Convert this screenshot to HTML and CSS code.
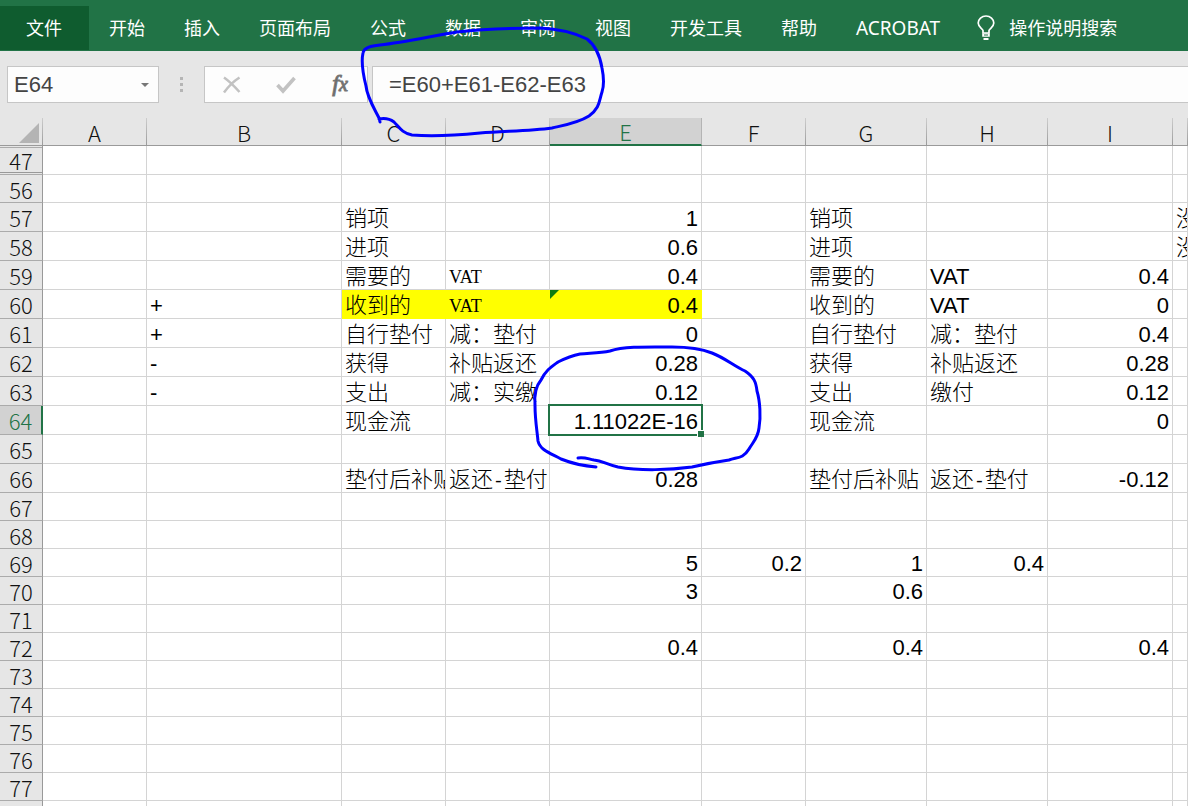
FILE: index.html
```html
<!DOCTYPE html>
<html lang="zh-CN">
<head>
<meta charset="utf-8">
<title>E64</title>
<link rel="stylesheet" href="styles.css">
</head>
<body>
<div class="app">
<nav class="ribbon">
<button class="tab file">文件</button>
<button class="tab">开始</button>
<button class="tab">插入</button>
<button class="tab">页面布局</button>
<button class="tab">公式</button>
<button class="tab">数据</button>
<button class="tab">审阅</button>
<button class="tab">视图</button>
<button class="tab">开发工具</button>
<button class="tab">帮助</button>
<button class="tab latin">ACROBAT</button>
<button class="tab tell"><svg class="bulb" viewBox="0 0 18 26" aria-hidden="true"><path d="M6 18v-2.500C5.500 13.500 1.200 12 1.200 8a7.800 7 0 0 1 15.600 0c0 4-4.300 5.500-4.800 7.500V18z" fill="none" stroke="#fff" stroke-width="1.700"/><path d="M5.200 18.500h7.600v3.300H5.200zM6.500 23h5v2h-5z" fill="#fff"/><path d="M7 20h4" stroke="#217346" stroke-width="1"/></svg>操作说明搜索</button>
</nav>
<div class="formula-bar">
<div class="box name-box"><input class="name-input" aria-label="名称框" value="E64"><button class="drop" aria-label="展开名称框"><svg width="8" height="4" viewBox="0 0 8 4"><path d="M0 0h8L4 4z" fill="#777"/></svg></button></div>
<div class="grip"><i></i><i></i><i></i></div>
<div class="box actions">
<button aria-label="取消"><svg width="20" height="18" viewBox="0 0 20 18"><path d="M2 1.500C7 5 13 11 17.500 16M17.500 1.500C12 5 6 11 2 16.500" fill="none" stroke="#c2c2c2" stroke-width="2.500"/></svg></button>
<button aria-label="输入"><svg width="20" height="18" viewBox="0 0 20 18"><path d="M1.500 9l5.500 6L18.500 2" fill="none" stroke="#c2c2c2" stroke-width="3.600"/></svg></button>
<button class="fx" aria-label="插入函数"><span class="f">f</span><span class="x">x</span></button>
</div>
<input class="box formula" aria-label="编辑栏" value="=E60+E61-E62-E63">
</div>
<main class="sheet">
<table class="grid">
<colgroup><col class="w-head"><col class="w-std"><col class="w-b"><col class="w-std"><col class="w-std"><col class="w-e"><col class="w-std"><col class="w-g"><col class="w-g"><col class="w-i"><col></colgroup>
<thead><tr><th class="corner"><svg width="20" height="20" viewBox="0 0 20 20"><path d="M20 0v20H0z" fill="#b4b4b4"/></svg></th><th>A</th><th>B</th><th>C</th><th>D</th><th class="active">E</th><th>F</th><th>G</th><th>H</th><th>I</th><th></th></tr></thead>
<tbody>
<tr class="tall"><th class="folded">47</th><td></td><td></td><td></td><td></td><td></td><td></td><td></td><td></td><td></td><td></td></tr>
<tr><th>56</th><td></td><td></td><td></td><td></td><td></td><td></td><td></td><td></td><td></td><td></td></tr>
<tr class="tall"><th>57</th><td></td><td></td><td class="zh">销项</td><td></td><td class="num">1</td><td></td><td class="zh">销项</td><td></td><td></td><td class="zh">没</td></tr>
<tr class="tall"><th>58</th><td></td><td></td><td class="zh">进项</td><td></td><td class="num">0.6</td><td></td><td class="zh">进项</td><td></td><td></td><td class="zh">没</td></tr>
<tr class="tall"><th>59</th><td></td><td></td><td class="zh">需要的</td><td class="serif">VAT</td><td class="num">0.4</td><td></td><td class="zh">需要的</td><td>VAT</td><td class="num">0.4</td><td></td></tr>
<tr class="tall"><th>60</th><td></td><td>+</td><td class="zh mark">收到的</td><td class="serif mark">VAT</td><td class="num mark flag">0.4</td><td></td><td class="zh">收到的</td><td>VAT</td><td class="num">0</td><td></td></tr>
<tr class="tall"><th>61</th><td></td><td>+</td><td class="zh">自行垫付</td><td class="zh">减：垫付</td><td class="num">0</td><td></td><td class="zh">自行垫付</td><td class="zh">减：垫付</td><td class="num">0.4</td><td></td></tr>
<tr class="tall"><th>62</th><td></td><td>-</td><td class="zh">获得</td><td class="zh">补贴返还</td><td class="num">0.28</td><td></td><td class="zh">获得</td><td class="zh">补贴返还</td><td class="num">0.28</td><td></td></tr>
<tr class="tall"><th>63</th><td></td><td>-</td><td class="zh">支出</td><td class="zh">减：实缴</td><td class="num">0.12</td><td></td><td class="zh">支出</td><td class="zh">缴付</td><td class="num">0.12</td><td></td></tr>
<tr class="tall"><th class="active">64</th><td></td><td></td><td class="zh">现金流</td><td></td><td class="num selected">1.11022E-16<span class="handle"></span></td><td></td><td class="zh">现金流</td><td></td><td class="num">0</td><td></td></tr>
<tr class="tall"><th>65</th><td></td><td></td><td></td><td></td><td></td><td></td><td></td><td></td><td></td><td></td></tr>
<tr class="tall"><th>66</th><td></td><td></td><td class="zh">垫付后补贴</td><td class="zh">返还<span class="dash">-</span>垫付</td><td class="num">0.28</td><td></td><td class="zh">垫付后补贴</td><td class="zh">返还<span class="dash">-</span>垫付</td><td class="num">-0.12</td><td></td></tr>
<tr><th>67</th><td></td><td></td><td></td><td></td><td></td><td></td><td></td><td></td><td></td><td></td></tr>
<tr><th>68</th><td></td><td></td><td></td><td></td><td></td><td></td><td></td><td></td><td></td><td></td></tr>
<tr><th>69</th><td></td><td></td><td></td><td></td><td class="num">5</td><td class="num">0.2</td><td class="num">1</td><td class="num">0.4</td><td></td><td></td></tr>
<tr><th>70</th><td></td><td></td><td></td><td></td><td class="num">3</td><td></td><td class="num">0.6</td><td></td><td></td><td></td></tr>
<tr><th>71</th><td></td><td></td><td></td><td></td><td></td><td></td><td></td><td></td><td></td><td></td></tr>
<tr><th>72</th><td></td><td></td><td></td><td></td><td class="num">0.4</td><td></td><td class="num">0.4</td><td></td><td class="num">0.4</td><td></td></tr>
<tr><th>73</th><td></td><td></td><td></td><td></td><td></td><td></td><td></td><td></td><td></td><td></td></tr>
<tr><th>74</th><td></td><td></td><td></td><td></td><td></td><td></td><td></td><td></td><td></td><td></td></tr>
<tr><th>75</th><td></td><td></td><td></td><td></td><td></td><td></td><td></td><td></td><td></td><td></td></tr>
<tr><th>76</th><td></td><td></td><td></td><td></td><td></td><td></td><td></td><td></td><td></td><td></td></tr>
<tr><th>77</th><td></td><td></td><td></td><td></td><td></td><td></td><td></td><td></td><td></td><td></td></tr>
<tr><th></th><td></td><td></td><td></td><td></td><td></td><td></td><td></td><td></td><td></td><td></td></tr>
</tbody>
</table>
</main>
<svg class="ink" width="800" height="480" viewBox="0 0 800 480" aria-hidden="true">
<path d="M380 122L379 118C374 108 367 97 366 86C363 74 361 62 363 53C364 47 372 46 380 45C405 42 432 36 457 32C485 29 515 28 540 28C562 29 575 33 587 39C595 45 600 56 602 68C604 78 604 86 602 92C599 101 600 108 589 116C578 123 565 125 552 128C530 131 505 131 480 133C460 135 435 137 412 135C402 133 399 127 394 122C390 119 384 118 379 119"/>
<path d="M596 467C583 466 571 463 561 459C550 453 540 450 538 441C537 430 535 420 535 405C534 393 536 386 541 380C546 370 551 367 558 362C568 357 575 355 580 354C590 353 600 353 610 351C625 346 650 347 672 347C690 347 702 349 712 353C725 358 734 366 745 371C754 377 756 382 757 391C760 401 761 417 759 428C758 438 753 442 749 449C743 459 737 457 729 460C715 462 705 464 692 467C670 470 640 471 618 467C605 464 603 461 594 460C588 459 585 457 578 458"/>
</svg>
</div>
</body>
</html>
```
FILE: styles.css
```css
* { box-sizing: border-box; }
body { margin: 0; background: #fff; font-family: "Liberation Sans", "Noto Sans CJK SC", sans-serif; }
button { border: 0; margin: 0; padding: 0; background: none; color: inherit; font: inherit; }
.app { position: relative; display: flex; flex-direction: column; height: 100vh; overflow: hidden; }

.ribbon { display: flex; gap: 1px; flex: none; height: 51px; padding: 6px 0 1px; overflow: hidden; background: #217346; color: #fff; font-family: "Noto Sans", "Noto Sans CJK SC", sans-serif; font-size: 18px; }
.tab { flex: none; padding: 0 19px; line-height: 42px; white-space: nowrap; }
.file { padding: 0 27px 0 26px; background: #0f5c2f; }
.latin { font-size: 19px; }
.tell { display: flex; align-items: center; gap: 14px; padding: 0 17px; }
.bulb { width: 18px; height: 26px; }

.formula-bar { display: flex; flex: none; padding: 15px 0 15px 7px; background: #e6e6e6; }
.box { height: 37px; border: 1px solid #c6c6c6; background: #fdfdfd; }
.name-box { display: flex; flex: none; width: 152px; }
.name-input, .formula { min-width: 0; color: #444; font-family: "Liberation Sans", sans-serif; font-size: 22px; outline: 0; border-radius: 0; }
.name-input { flex: 1; border: 0; padding: 0 0 0 6px; background: transparent; }
.drop { display: flex; align-items: center; justify-content: center; width: 26px; }
.grip { display: flex; flex: none; flex-direction: column; align-items: center; justify-content: center; gap: 3px; width: 45px; }
.grip i { width: 3px; height: 3px; background: #b5b5b5; }
.actions { display: flex; flex: none; width: 164px; }
.actions button { display: flex; flex: 1; align-items: center; justify-content: center; }
.actions .fx { align-items: baseline; color: #666; font-family: "Liberation Serif", serif; font-style: italic; line-height: 32px; -webkit-text-stroke: 1px #777; }
.fx .f { font-size: 24px; }
.fx .x { font-size: 20px; }
.formula { flex: 1; margin-left: 4px; border-right: 0; padding: 0 16px; }

.sheet { flex: 1; min-height: 0; overflow: hidden; }
.grid { width: 100%; min-width: 1188px; table-layout: fixed; border-collapse: separate; border-spacing: 0; font-size: 22px; }
.w-head { width: 43px; }
.w-std { width: 104px; }
.w-b { width: 195px; }
.w-e { width: 152px; }
.w-g { width: 121px; }
.w-i { width: 125px; }
tr { height: 28px; }
.tall { height: 29px; }
th, td { padding: 0; white-space: nowrap; line-height: 24px; }
td { position: relative; overflow: hidden; padding: 3px 3px 0; border-right: 1px solid #d4d4d4; border-bottom: 1px solid #d4d4d4; color: #000; }
th { background: #e6e6e6; color: #111; font-family: "Noto Sans CJK SC", sans-serif; font-weight: 300; text-align: center; }
thead th { border-right: 1px solid; border-image: linear-gradient(#cfcfcf, #999) 1; border-bottom: 1px solid #999; }
tbody th { border-right: 1px solid #999; border-bottom: 1px solid #ababab; }
thead .active { border-image: none; border-right: 1px solid #b4b4b4; border-bottom: 2px solid #217346; background: #d2d2d2; color: #217346; }
tbody .active { border-right: 2px solid #217346; background: #d2d2d2; color: #217346; }
.corner { padding: 2px 3px 0 0; line-height: 0; text-align: right; }
.folded { background: linear-gradient(#ababab, #ababab) 0 1px / 100% 1px no-repeat, linear-gradient(#999, #999) 0 26px / 100% 1px no-repeat, #e6e6e6; }
.zh { padding: 0 3px 2px; font-family: "Noto Sans CJK SC", sans-serif; font-weight: 300; }
.serif { font-family: "Liberation Serif", serif; font-size: 18px; }
.dash { font-family: "Liberation Mono", monospace; font-size: 18px; line-height: 0; }
.num { text-align: right; }
.mark { border-color: #ff0; background: #ff0; }
.flag::before { content: ""; position: absolute; left: 0; top: 0; border-top: 9px solid #107c10; border-right: 9px solid transparent; }
.selected { z-index: 1; overflow: visible; }
.selected::before { content: ""; position: absolute; inset: -2px; border: 2px solid #217346; }
.handle { position: absolute; right: -3px; bottom: -3px; width: 7px; height: 7px; border: solid #fff; border-width: 1px 0 0 1px; background: #217346; }

.ink { position: absolute; z-index: 2; left: 0; top: 0; pointer-events: none; fill: none; stroke: #00f; stroke-width: 3; stroke-linecap: round; stroke-linejoin: round; }
```
